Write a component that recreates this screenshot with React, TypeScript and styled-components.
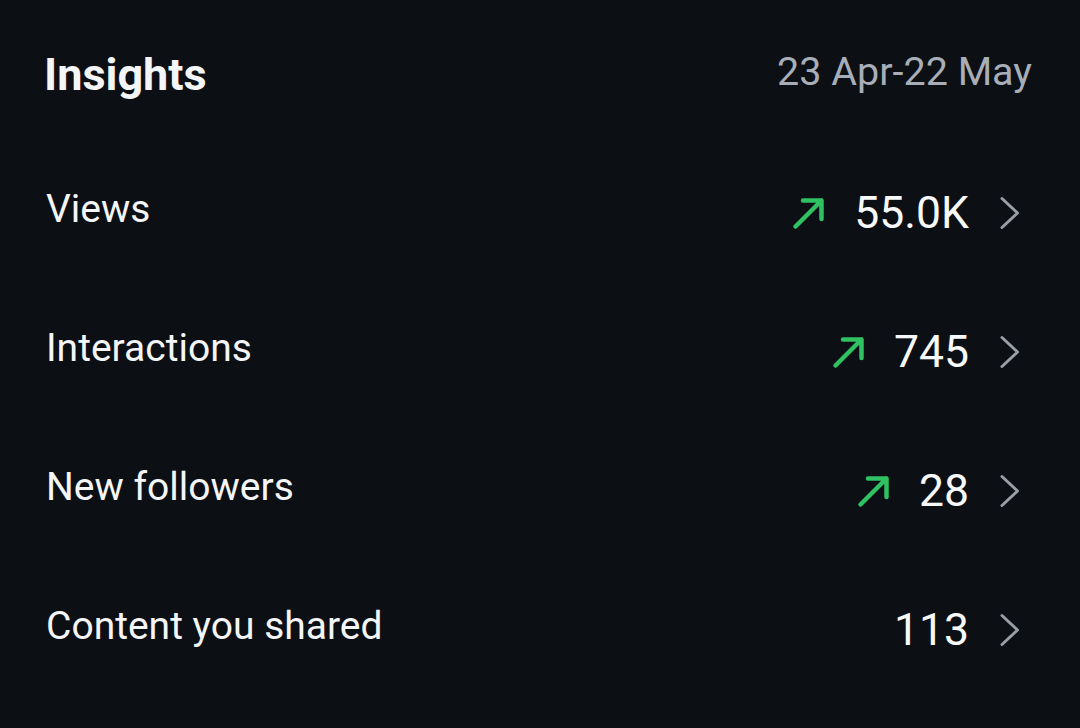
import React from "react";
import styled, { createGlobalStyle } from "styled-components";

const GlobalStyle = createGlobalStyle`
  html, body {
    margin: 0;
    padding: 0;
    background: #0c0f14;
  }
  body {
    font-family: Roboto, "Noto Sans", "Liberation Sans", sans-serif;
    -webkit-font-smoothing: antialiased;
  }
`;

const Page = styled.div`
  width: 1080px;
  height: 728px;
  box-sizing: border-box;
  padding: 52px 0 0 0;
  background: #0c0f14;
  overflow: hidden;
`;

const Header = styled.div`
  display: flex;
  align-items: flex-start;
  justify-content: space-between;
  padding: 0 48px 0 44px;
`;

const Title = styled.h1`
  margin: 0;
  font-size: 45px;
  line-height: 1;
  font-weight: 700;
  color: #f4f5f7;
`;

const DateRange = styled.span`
  font-size: 39.5px;
  line-height: 1;
  color: #a8aeb8;
`;

const List = styled.ul`
  list-style: none;
  margin: 47px 0 0 0;
  padding: 0;
`;

const Row = styled.li`
  height: 139px;
  display: flex;
  align-items: center;
  justify-content: space-between;
  padding: 0 58px 0 46px;
`;

const Label = styled.span`
  font-size: 39px;
  line-height: 1.2;
  color: #f4f5f7;
  margin-bottom: 8px;
`;

const Right = styled.div`
  display: flex;
  align-items: center;
`;

const Value = styled.span`
  font-size: 44.5px;
  line-height: 1.2;
  color: #f7f8f9;
  margin-left: 28px;
`;

const Chevron = styled.svg`
  margin-left: 29px;
  flex-shrink: 0;
`;

const Arrow = styled.svg`
  flex-shrink: 0;
`;

const TrendUp = () => (
  <Arrow width="34" height="34" viewBox="0 0 34 34" fill="none">
    <path
      d="M3.5 30.5 L29.5 4.5 M11 4.5 H29.5 V23"
      stroke="#2fc162"
      strokeWidth="4.5"
      strokeLinecap="round"
      strokeLinejoin="round"
    />
  </Arrow>
);

const ChevronRight = () => (
  <Chevron width="24" height="36" viewBox="0 0 24 36" fill="none">
    <path
      d="M4 3.5 L19.5 18 L4 32.5"
      stroke="#9a9ea6"
      strokeWidth="3"
      strokeLinecap="round"
      strokeLinejoin="round"
    />
  </Chevron>
);

type Metric = { label: string; value: string; trending: boolean };

const metrics: Metric[] = [
  { label: "Views", value: "55.0K", trending: true },
  { label: "Interactions", value: "745", trending: true },
  { label: "New followers", value: "28", trending: true },
  { label: "Content you shared", value: "113", trending: false },
];

export default function App() {
  return (
    <>
      <GlobalStyle />
      <Page>
        <Header>
          <Title>Insights</Title>
          <DateRange>23 Apr-22 May</DateRange>
        </Header>
        <List>
          {metrics.map((m) => (
            <Row key={m.label}>
              <Label>{m.label}</Label>
              <Right>
                {m.trending && <TrendUp />}
                <Value>{m.value}</Value>
                <ChevronRight />
              </Right>
            </Row>
          ))}
        </List>
      </Page>
    </>
  );
}
